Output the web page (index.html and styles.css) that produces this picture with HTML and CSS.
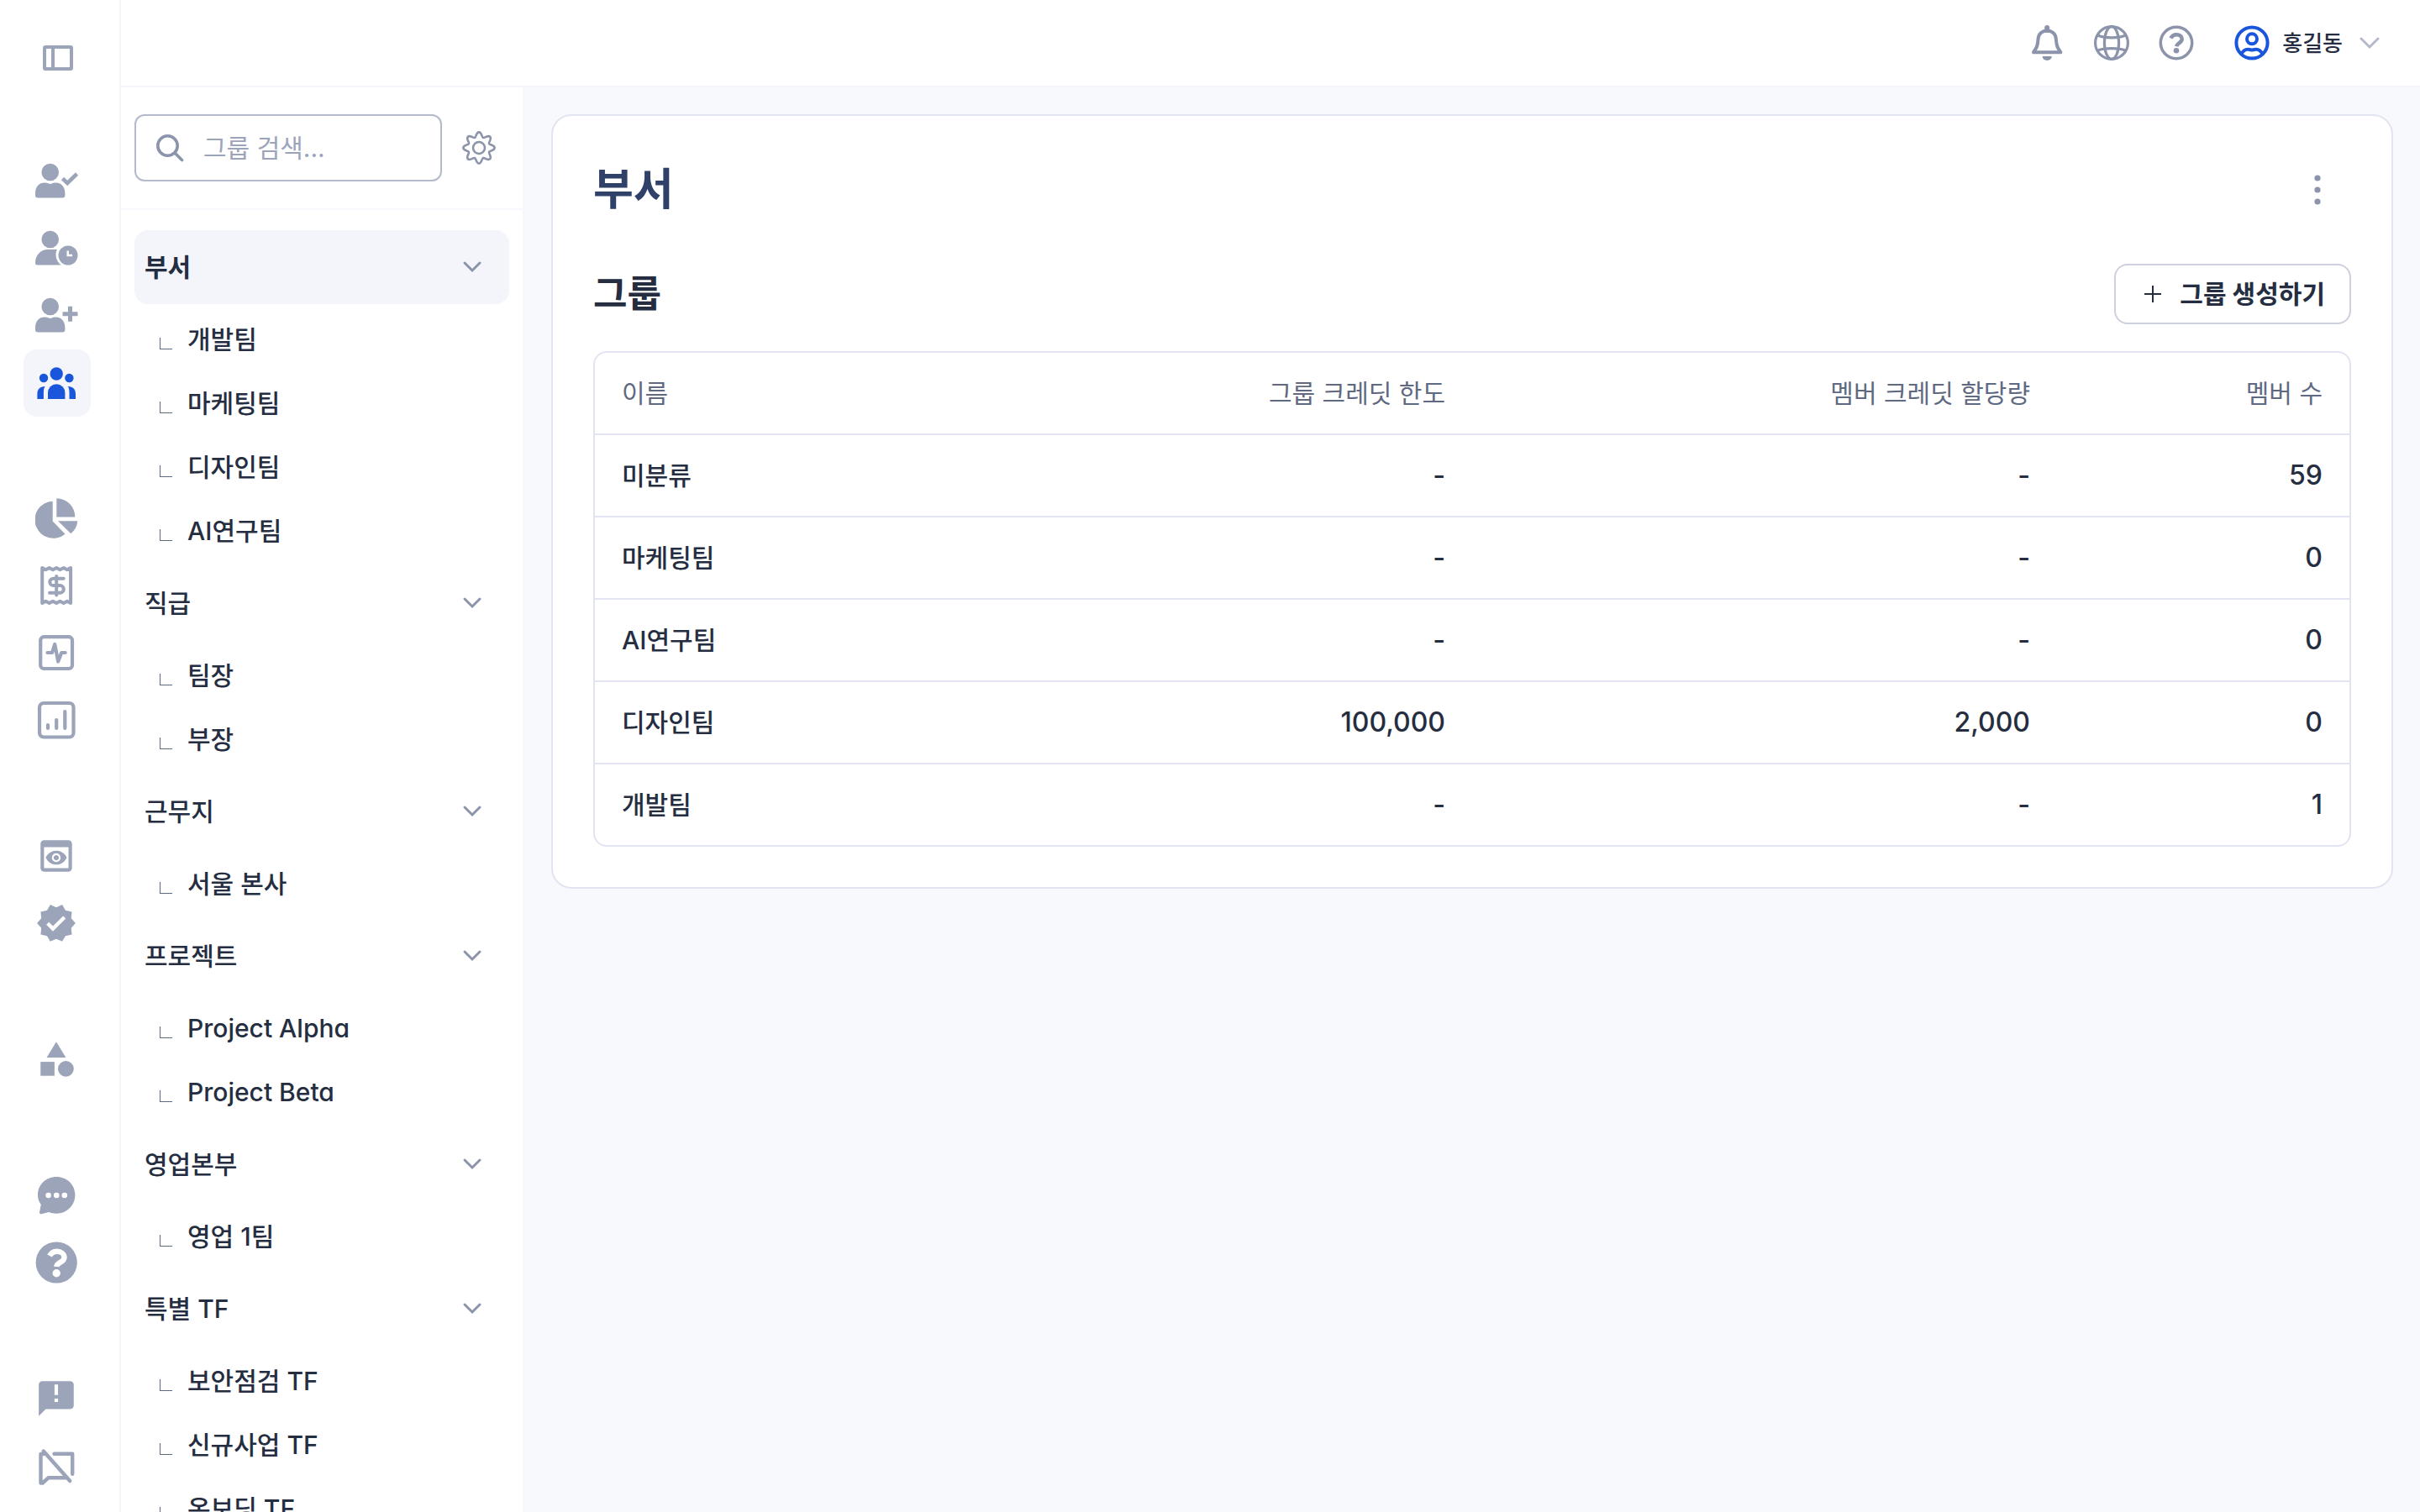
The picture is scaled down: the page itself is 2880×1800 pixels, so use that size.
FILE: index.html
```html
<!DOCTYPE html>
<html lang="ko">
<head>
<meta charset="UTF-8">
<meta name="viewport" content="width=device-width, initial-scale=1">
<title>그룹 관리</title>
<link rel="stylesheet" href="styles.css">
</head>
<body>

<div class="app">

  <!-- ICON SIDEBAR -->
  <aside class="sidebar">
    <button class="collapse-btn" type="button" aria-label="사이드바 접기">
      <svg width="36" height="30" viewBox="0 0 36 30" fill="none" stroke="currentColor" stroke-width="4"><rect x="2" y="2" width="32" height="26" rx="1"/><path d="M12 2v26"/></svg>
    </button>

    <nav class="nav">
      <div class="nav-group">
        <a class="nav-link" href="#" aria-label="승인된 사용자">
          <svg viewBox="0 0 52 52"><circle cx="17.7" cy="15" r="10.3"/><path d="M0 40c0-8 5-12.5 11-12.5 4 0 5 1.5 6.7 1.5s2.7-1.5 6.7-1.5c6 0 11 4.5 11 12.5v2.5a3 3 0 0 1-3 3H3a3 3 0 0 1-3-3z"/><path d="M32.5 22.5l5.7 5.5L49.500 17" fill="none" stroke="currentColor" stroke-width="4.6"/></svg>
        </a>
        <a class="nav-link" href="#" aria-label="대기 중인 사용자">
          <svg viewBox="0 0 52 52"><circle cx="17.7" cy="15" r="10.3"/><path d="M0 43c0-9 6-16 15-16h10.8a15 15 0 0 0 5.2 18.5H2.5A2.5 2.5 0 0 1 0 43z"/><circle cx="39" cy="34" r="11.5"/><path d="M38.7 28.5V34H44" fill="none" stroke="#fff" stroke-width="2.4"/></svg>
        </a>
        <a class="nav-link" href="#" aria-label="사용자 추가">
          <svg viewBox="0 0 52 52"><circle cx="17.7" cy="15" r="10.3"/><path d="M0 40c0-8 5-12.5 11-12.5 4 0 5 1.5 6.7 1.5s2.7-1.5 6.7-1.5c6 0 11 4.5 11 12.5v2.5a3 3 0 0 1-3 3H3a3 3 0 0 1-3-3z"/><path d="M32.5 23.7h18M41.5 14.7v18" fill="none" stroke="currentColor" stroke-width="5"/></svg>
        </a>
        <a class="nav-link active" href="#" aria-label="그룹" aria-current="page">
          <svg viewBox="0 0 52 52"><circle cx="25.2" cy="15" r="7.7"/><circle cx="10" cy="20" r="5.2"/><circle cx="40.4" cy="20" r="5.2"/><path d="M15 45v-7.5a10.2 10.2 0 0 1 20.4 0V45z"/><path d="M2.4 45v-6c0-5.5 3-9 9.2-9-1.3 2-1.7 4.5-1.7 8v7z"/><path d="M48 45v-6c0-5.5-3-9-9.2-9 1.3 2 1.7 4.5 1.7 8v7z"/></svg>
        </a>
      </div>

      <div class="nav-group">
        <a class="nav-link" href="#" aria-label="사용 현황">
          <svg viewBox="0 0 52 52"><path d="M20.7 4.8v23.7l14.8 15.2A22 22 0 1 1 20.7 4.8z"/><path d="M25.3 1.3a22 22 0 0 1 22 22.2h-22z"/><path d="M27 28.2h23.3a22 22 0 0 1-8 15z"/></svg>
        </a>
        <a class="nav-link" href="#" aria-label="결제">
          <svg viewBox="0 0 52 52" fill="none" stroke="currentColor" stroke-width="4" stroke-linecap="round" stroke-linejoin="round"><path d="M8.2 4l4.2 2.3L16.7 4l4.2 2.3L25.2 4l4.2 2.3L33.7 4l4.2 2.3L42.1 4v42l-4.2-2.3-4.2 2.3-4.3-2.3-4.2 2.3-4.3-2.3-4.2 2.3-4.3-2.3L8.2 46z"/><path d="M33.7 16.7H21.5a4.2 4.2 0 0 0 0 8.4h8a4.3 4.3 0 0 1 0 8.6H17M25.2 14v22.5"/></svg>
        </a>
        <a class="nav-link" href="#" aria-label="활동 로그">
          <svg viewBox="0 0 52 52" fill="none" stroke="currentColor" stroke-width="4.2" stroke-linecap="round" stroke-linejoin="round"><rect x="6.2" y="6.2" width="37.8" height="37.8" rx="4"/><path d="M14.5 25h5.500l3.2-10 4 20.500L31.2 25h4.500"/></svg>
        </a>
        <a class="nav-link" href="#" aria-label="통계">
          <svg viewBox="0 0 52 52" fill="none" stroke="currentColor" stroke-width="4.2" stroke-linecap="round"><rect x="5" y="5" width="40.5" height="40.5" rx="5"/><path d="M15 31v4M25.2 25v10M35.3 15v20"/></svg>
        </a>
      </div>

      <div class="nav-group">
        <a class="nav-link" href="#" aria-label="모니터링">
          <svg viewBox="0 0 25 25"><path d="M19 3H5c-1.11 0-2 .9-2 2v14c0 1.1.89 2 2 2h14c1.1 0 2-.9 2-2V5c0-1.1-.89-2-2-2zm0 16H5V7h14v12zm-5.5-6c0 .83-.67 1.5-1.5 1.5s-1.5-.67-1.5-1.5.67-1.5 1.5-1.5 1.5.67 1.5 1.5zM12 9c-2.73 0-5.06 1.66-6 4 .94 2.34 3.27 4 6 4s5.06-1.66 6-4c-.94-2.34-3.27-4-6-4zm0 6.5c-1.38 0-2.5-1.12-2.5-2.5s1.12-2.5 2.5-2.5 2.5 1.12 2.5 2.5-1.12 2.5-2.5 2.5z"/></svg>
        </a>
        <a class="nav-link" href="#" aria-label="인증">
          <svg viewBox="0 0 25 25"><path d="M23 12l-2.44-2.79.34-3.69-3.61-.82-1.89-3.2L12 2.96 8.6 1.5 6.71 4.69 3.1 5.5l.34 3.7L1 12l2.44 2.79-.34 3.7 3.61.82L8.6 22.5l3.4-1.47 3.4 1.46 1.89-3.19 3.61-.82-.34-3.69L23 12zm-12.91 4.72l-3.8-3.81 1.48-1.48 2.32 2.33 5.85-5.87 1.48 1.48-7.33 7.35z"/></svg>
        </a>
      </div>

      <div class="nav-group">
        <a class="nav-link" href="#" aria-label="카테고리">
          <svg viewBox="0 0 25 25"><path d="M12 2l-5.5 9h11z"/><circle cx="17.5" cy="17.5" r="4.5"/><path d="M3 13.5h8v8H3z"/></svg>
        </a>
      </div>

      <div class="nav-group">
        <a class="nav-link" href="#" aria-label="채팅">
          <svg viewBox="0 0 52 52"><path d="M25.2 3C12.5 3 3 12.5 3 24.5c0 4.5 1.2 8 3.8 11.5L5 45a2 2 0 0 0 2.3 2.3L16 45c3 1 5.5 1.7 9 1.7 13 0 22.4-10.2 22.4-22.2S37.7 3 25.2 3z"/><g fill="#fff"><circle cx="15.6" cy="25" r="3.3"/><circle cx="25.2" cy="25" r="3.3"/><circle cx="34.8" cy="25" r="3.3"/></g></svg>
        </a>
        <a class="nav-link" href="#" aria-label="도움말">
          <svg viewBox="0 0 52 52"><circle cx="25.2" cy="25" r="24.6"/><path d="M17 17c2-3.6 4.8-5.3 8.5-5.3 5 0 9 3 9 7.3 0 6-8.800 5.5-9.2 11" fill="none" stroke="#fff" stroke-width="6.4"/><circle cx="25.2" cy="37.7" r="4.7" fill="#fff"/></svg>
        </a>
      </div>

      <div class="nav-group">
        <a class="nav-link" href="#" aria-label="피드백">
          <svg viewBox="0 0 25 25"><path d="M20 2H4c-1.1 0-1.99.9-1.99 2L2 22l4-4h14c1.1 0 2-.9 2-2V4c0-1.1-.9-2-2-2zm-7 12h-2v-2h2v2zm0-4h-2V4h2v6z"/></svg>
        </a>
        <a class="nav-link" href="#" aria-label="채팅 차단">
          <svg viewBox="0 0 52 52" fill="none" stroke="currentColor" stroke-width="4.4" stroke-linecap="round" stroke-linejoin="round"><path d="M9.7 7.5l31.5 35.5M9.7 11H6.5v34.5h2.2l7-6.3h21M22.5 10.8h21.7v24"/></svg>
        </a>
      </div>
    </nav>
  </aside>

  <div class="page">

    <!-- TOP BAR -->
    <header class="topbar">
      <div class="topbar-icons">
        <button class="icon-btn" type="button" aria-label="알림">
          <svg viewBox="0 0 44 44"><path d="M6 33.3h32.4c-3.9-5.3-5.1-8-5.6-16.3C32.4 11 27.7 7.5 22.2 7.5S12 11 11.6 17C11.1 25.3 9.9 28 6 33.3z" fill="none" stroke="currentColor" stroke-width="4" stroke-linejoin="round"/><path d="M22.2 4v3" stroke="currentColor" stroke-width="6" stroke-linecap="round"/><path d="M16.6 38h11.2a5.6 5 0 0 1-11.2 0z" fill="currentColor"/></svg>
        </button>
        <button class="icon-btn" type="button" aria-label="언어">
          <svg viewBox="0 0 44 44" fill="none" stroke="currentColor" stroke-width="3.2"><circle cx="22" cy="22" r="19.4"/><ellipse cx="22" cy="22" rx="8.6" ry="19.4"/><path d="M5.5 13c8 3.8 25 3.8 33 0M5.5 31c8-3.2 25-3.2 33 0"/></svg>
        </button>
        <button class="icon-btn" type="button" aria-label="도움말">
          <svg viewBox="0 0 44 44" fill="none" stroke="currentColor" stroke-width="3.5"><circle cx="22" cy="22" r="18.7"/><path d="M15.5 16.5c1.3-3 3.5-4.3 6.7-4.3 4 0 6.5 2.2 6.5 5.3 0 4.2-5.5 4.7-6.5 8.7" stroke-width="4.6"/><circle cx="22" cy="31.3" r="3.3" fill="currentColor" stroke="none"/></svg>
        </button>
      </div>
      <button class="user-btn" type="button">
        <svg class="user-icon" viewBox="0 0 44 44" fill="none" stroke="currentColor" stroke-width="4"><circle cx="22" cy="22" r="18.6"/><circle cx="22" cy="17.3" r="6"/><path d="M9.5 35.5c2-4.5 5-5.8 7.5-5.8 1.5 0 3 .8 5 .8s3.5-.8 5-.8c2.5 0 5.5 1.3 7.5 5.8"/></svg>
        <span>홍길동</span>
        <svg class="user-chevron" viewBox="0 0 24 24"><path d="M2 7l10 10L22 7"/></svg>
      </button>
    </header>

    <div class="body">

      <!-- GROUP TREE -->
      <section class="tree">
        <div class="tree-search">
          <div class="search-box">
            <svg viewBox="0 0 34 34" fill="none" stroke="currentColor" stroke-width="3.6" stroke-linecap="round"><circle cx="13.5" cy="14.500" r="11.7"/><path d="M22.5 23.500l8 8"/></svg>
            <input type="text" placeholder="그룹 검색..." aria-label="그룹 검색">
          </div>
          <button class="settings-btn" type="button" aria-label="그룹 설정">
            <svg viewBox="-20 -20 40 40" fill="none" stroke="currentColor" stroke-width="2.6"><circle r="7"/><path d="M-5-12C-3.2-12.8-3.4-18.6 0-18.6S3.2-12.8 5-12C6.8-11.3 10.7-15.6 13.2-13.2S11.3-6.8 12-5C12.8-3.2 18.6-3.4 18.6 0S12.8 3.2 12 5C11.3 6.8 15.6 10.7 13.2 13.2S6.8 11.3 5 12C3.2 12.8 3.4 18.6 0 18.6S-3.2 12.8-5 12C-6.8 11.3-10.7 15.6-13.2 13.2S-11.3 6.8-12 5C-12.8 3.2-18.6 3.4-18.6 0S-12.8-3.2-12-5C-11.3-6.8-15.6-10.7-13.2-13.2S-6.8-11.3-5-12z"/></svg>
          </button>
        </div>

        <div class="tree-list">
          <button class="tree-head selected" type="button">부서 <svg class="chevron" viewBox="0 0 24 24"><path d="M3 7l9 9 9-9"/></svg></button>
          <ul class="tree-items">
            <li><a href="#">개발팀</a></li>
            <li><a href="#">마케팅팀</a></li>
            <li><a href="#">디자인팀</a></li>
            <li><a href="#">AI연구팀</a></li>
          </ul>
          <button class="tree-head" type="button">직급 <svg class="chevron" viewBox="0 0 24 24"><path d="M3 7l9 9 9-9"/></svg></button>
          <ul class="tree-items">
            <li><a href="#">팀장</a></li>
            <li><a href="#">부장</a></li>
          </ul>
          <button class="tree-head" type="button">근무지 <svg class="chevron" viewBox="0 0 24 24"><path d="M3 7l9 9 9-9"/></svg></button>
          <ul class="tree-items">
            <li><a href="#">서울 본사</a></li>
          </ul>
          <button class="tree-head" type="button">프로젝트 <svg class="chevron" viewBox="0 0 24 24"><path d="M3 7l9 9 9-9"/></svg></button>
          <ul class="tree-items">
            <li><a href="#">Project Alpha</a></li>
            <li><a href="#">Project Beta</a></li>
          </ul>
          <button class="tree-head" type="button">영업본부 <svg class="chevron" viewBox="0 0 24 24"><path d="M3 7l9 9 9-9"/></svg></button>
          <ul class="tree-items">
            <li><a href="#">영업 1팀</a></li>
          </ul>
          <button class="tree-head" type="button">특별 TF <svg class="chevron" viewBox="0 0 24 24"><path d="M3 7l9 9 9-9"/></svg></button>
          <ul class="tree-items">
            <li><a href="#">보안점검 TF</a></li>
            <li><a href="#">신규사업 TF</a></li>
            <li><a href="#">온보딩 TF</a></li>
          </ul>
        </div>
      </section>

      <!-- MAIN CONTENT -->
      <main class="content">
        <div class="card">
          <div class="card-head">
            <h1>부서</h1>
            <button class="more-btn" type="button" aria-label="더보기">
              <svg viewBox="0 0 40 40"><circle cx="20" cy="6" r="3.6"/><circle cx="20" cy="20" r="3.6"/><circle cx="20" cy="34" r="3.6"/></svg>
            </button>
          </div>
          <div class="section-head">
            <h2>그룹</h2>
            <button class="create-btn" type="button">
              <svg viewBox="0 0 20 20"><path d="M0 10h20M10 0v20"/></svg>
              그룹 생성하기
            </button>
          </div>
          <div class="table-wrap">
            <table>
              <thead>
                <tr><th>이름</th><th>그룹 크레딧 한도</th><th>멤버 크레딧 할당량</th><th>멤버 수</th></tr>
              </thead>
              <tbody>
                <tr><td>미분류</td><td>-</td><td>-</td><td>59</td></tr>
                <tr><td>마케팅팀</td><td>-</td><td>-</td><td>0</td></tr>
                <tr><td>AI연구팀</td><td>-</td><td>-</td><td>0</td></tr>
                <tr><td>디자인팀</td><td>100,000</td><td>2,000</td><td>0</td></tr>
                <tr><td>개발팀</td><td>-</td><td>-</td><td>1</td></tr>
              </tbody>
            </table>
          </div>
        </div>
      </main>

    </div>
  </div>
</div>

</body>
</html>
```
FILE: styles.css
```css
* { box-sizing: border-box; }

body {
  margin: 0;
  font-family: Inter, "Noto Sans CJK KR", sans-serif;
  font-size: 30px;
  font-weight: 500;
  font-feature-settings: "cv11";
  line-height: 1.5;
  color: #252d41;
  background: #ffffff;
}

button, input { font: inherit; font-feature-settings: inherit; color: inherit; }
button { padding: 0; border: none; background: none; cursor: pointer; }
a { color: inherit; text-decoration: none; }
svg { display: block; flex-shrink: 0; }

.app {
  display: flex;
  height: 100vh;
  overflow: hidden;
}

/* ICON SIDEBAR */
.sidebar {
  width: 144px;
  flex-shrink: 0;
  padding: 29px 0 0 28px;
  border-right: 2px solid #f4f5fb;
  color: #9ca4ba;
}

.collapse-btn {
  display: flex;
  align-items: center;
  justify-content: center;
  width: 82px;
  height: 80px;
  margin-bottom: 67px;
}

.nav { display: flex; flex-direction: column; gap: 82px; }

.nav-link {
  display: flex;
  align-items: center;
  justify-content: center;
  width: 80px;
  height: 80px;
  border-radius: 16px;
}
.nav-link svg { width: 52px; height: 52px; }
.nav-link svg:not([fill]) { fill: currentColor; }
.nav-link.active { background: #f4f5fb; color: #1a56db; }

/* TOP BAR */
.page {
  flex: 1;
  min-width: 0;
  display: flex;
  flex-direction: column;
}

.topbar {
  display: flex;
  align-items: center;
  justify-content: flex-end;
  gap: 46px;
  height: 104px;
  flex-shrink: 0;
  padding-right: 48px;
  border-bottom: 2px solid #f4f5fb;
}
.topbar-icons { display: flex; gap: 33px; color: #8b94aa; }
.icon-btn svg, .user-icon { width: 44px; height: 44px; }

.user-btn { display: flex; align-items: center; gap: 14px; font-size: 26px; }
.user-icon { color: #1a56db; }
.user-chevron {
  width: 24px;
  height: 24px;
  margin-left: 6px;
  fill: none;
  stroke: #b4bacb;
  stroke-width: 3;
  stroke-linecap: round;
}

.body { flex: 1; min-height: 0; display: flex; }

/* GROUP TREE */
.tree {
  width: 480px;
  flex-shrink: 0;
  display: flex;
  flex-direction: column;
  border-right: 2px solid #f6f7fd;
}

.tree-search {
  display: flex;
  align-items: center;
  gap: 24px;
  padding: 32px 32px 32px 16px;
  border-bottom: 2px solid #f8f9fd;
}

.search-box {
  flex: 1;
  min-width: 0;
  display: flex;
  align-items: center;
  gap: 22px;
  height: 80px;
  padding: 0 24px;
  border: 2px solid #b4bacb;
  border-radius: 12px;
  color: #8b94aa;
}
.search-box svg { width: 34px; height: 34px; }
.search-box input {
  flex: 1;
  min-width: 0;
  padding: 0;
  border: none;
  outline: none;
  background: none;
  font-weight: 400;
  color: #252d41;
}
.search-box input::placeholder { color: #9ca4ba; opacity: 1; }

.settings-btn { color: #8b94aa; }
.settings-btn svg { width: 40px; height: 40px; }

.tree-list {
  flex: 1;
  min-height: 0;
  padding: 24px 16px;
  overflow: hidden;
}

.tree-head {
  display: flex;
  align-items: center;
  justify-content: space-between;
  width: 100%;
  height: 88px;
  padding: 0 32px 0 12px;
  border-radius: 16px;
}
.tree-head.selected { background: #f4f5fb; font-weight: 700; }

.chevron {
  width: 24px;
  height: 24px;
  fill: none;
  stroke: #8b94aa;
  stroke-width: 3;
  stroke-linecap: round;
}

.tree-items { list-style: none; margin: 4px 0; padding: 0; }
.tree-items a {
  display: flex;
  align-items: center;
  gap: 18px;
  height: 76px;
  padding-left: 30px;
}
.tree-items a::before {
  content: "";
  width: 14px;
  height: 13px;
  margin-top: 9px;
  border: solid #5f6a82;
  border-width: 0 0 1px 1px;
}

/* MAIN CONTENT */
.content {
  flex: 1;
  min-width: 0;
  padding: 32px;
  background: #f8f9fd;
}

.card {
  padding: 48px;
  background: #ffffff;
  border: 2px solid #e2e4f1;
  border-radius: 24px;
}

.card-head, .section-head {
  display: flex;
  align-items: center;
  justify-content: space-between;
}
.card-head { height: 80px; margin-bottom: 48px; }
.card-head h1 { margin: 0; font-size: 52px; font-weight: 700; color: #2f4168; }
.section-head { height: 72px; margin-bottom: 32px; }
.section-head h2 { margin: 0; font-size: 44px; font-weight: 700; }

.more-btn {
  display: flex;
  align-items: center;
  justify-content: center;
  width: 80px;
  height: 80px;
}
.more-btn svg { width: 40px; height: 40px; fill: #8b94aa; }

.create-btn {
  display: flex;
  align-items: center;
  gap: 22px;
  height: 72px;
  padding: 0 29px 0 34px;
  border: 2px solid #cdd1de;
  border-radius: 16px;
  font-weight: 700;
}
.create-btn svg { width: 20px; height: 20px; stroke: #252d41; stroke-width: 2; }

.table-wrap { border: 2px solid #e2e4f1; border-radius: 16px; }

table {
  width: 100%;
  table-layout: fixed;
  border-spacing: 0;
}
th, td {
  height: 98px;
  padding: 0 32px;
  border-bottom: 2px solid #e2e4f1;
  text-align: right;
  font-size: 30px;
  white-space: nowrap;
}
th { font-weight: 400; color: #5f6a82; width: calc(100% / 3); }
th:first-child, th:last-child { width: calc(100% / 6); }
th:first-child, td:first-child { text-align: left; }
td:not(:first-child) { font-size: 32px; }
tbody tr:last-child td { height: 96px; border-bottom: none; }
```
